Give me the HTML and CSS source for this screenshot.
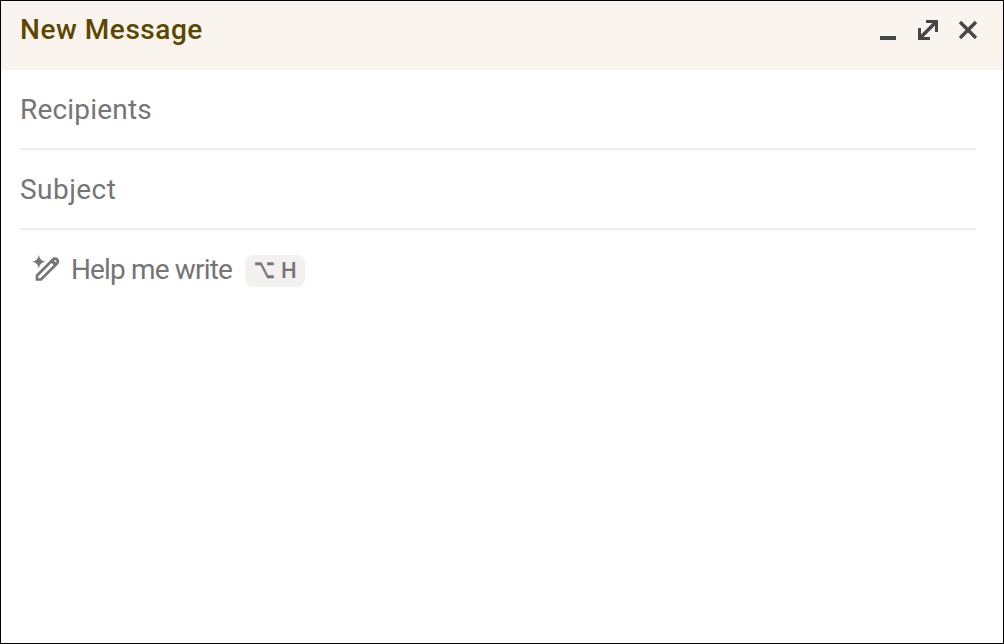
FILE: index.html
```html
<!DOCTYPE html>
<html lang="en">

<head>
    <meta charset="utf-8">
    <title>New Message</title>
    <link rel="stylesheet" href="styles.css">
</head>

<body>
    <div class="compose">
        <div class="header">
            <div class="title">New Message</div>
            <div class="actions">
                <svg class="icon" width="24" height="24" viewBox="0 0 24 24">
                    <path d="M4 18h16v4H4z" />
                </svg>
                <svg class="icon" width="24" height="24" viewBox="0 0 24 24">
                    <path d="M10 2h12v12h-3V7.500L7.500 19H14v3H2V10h3v6.500L16.500 5H10z" />
                </svg>
                <svg class="icon close" width="24" height="24" viewBox="0 0 24 24">
                    <path d="M4 4l16 16M20 4L4 20" />
                </svg>
            </div>
        </div>

        <div class="fields">
            <div class="field"><span class="recipients">Recipients</span></div>
            <div class="field"><span class="subject">Subject</span></div>
        </div>

        <div class="help">
            <svg class="pencil" width="28" height="28" viewBox="0 0 28 28">
                <path class="star" d="M6.800 0Q7.800 5.800 13.300 6.700Q7.800 7.600 6.800 13.400Q5.800 7.600 0.300 6.700Q5.800 5.800 6.800 0z" />
                <path class="outline" d="M5 24.500v-4L21 4.500a2.600 2.600 0 0 1 4 4L9 24.500z" />
                <path class="star" d="M18.500 7L21 4.500l4 4-2.500 2.500z" />
            </svg>
            <span class="help-text">Help me write</span>
            <span class="shortcut"><span class="option">⌥</span><span class="key">H</span></span>
        </div>
    </div>
</body>

</html>
```
FILE: styles.css
```css
* {
    box-sizing: border-box;
}

body {
    margin: 0;
    font-family: Roboto, "Liberation Sans", sans-serif;
    font-size: 28px;
    color: #757575;
}

.compose {
    height: 644px;
    border: 1px solid #000;
    background-color: #fff;
}

.header {
    display: flex;
    justify-content: space-between;
    height: 69px;
    padding: 9px 23px 0 19px;
    background-color: #f9f5ee;
}

.title {
    line-height: 40px;
    font-weight: 500;
    letter-spacing: 0.55px;
    color: #5c4700;
}

.actions {
    display: flex;
    gap: 16px;
    padding-top: 8px;
}

.icon {
    fill: #444746;
}

.close {
    fill: none;
    stroke: #444746;
    stroke-width: 3.3;
}

.fields {
    margin: 0 27px 0 19px;
}

.field {
    height: 80px;
    line-height: 79px;
    border-bottom: 2px solid #eee;
}

.recipients {
    letter-spacing: 0.2px;
}

.subject {
    letter-spacing: 0.45px;
}

.help {
    display: flex;
    align-items: center;
    height: 80px;
    padding-left: 31px;
}

.pencil {
    margin: 0 11px 3px 0;
}

.star {
    fill: #757575;
}

.outline {
    fill: none;
    stroke: #757575;
    stroke-width: 2.7;
}

.help-text {
    margin-bottom: 2px;
    letter-spacing: -0.85px;
}

.shortcut {
    display: flex;
    align-items: center;
    width: 60px;
    height: 32px;
    margin: 2px 0 0 13px;
    padding-left: 9px;
    border-radius: 8px;
    background-color: #f2f1f0;
    font-size: 22px;
    font-weight: 500;
}

.option {
    width: 27px;
    margin-bottom: 6px;
    font-family: "DejaVu Sans", sans-serif;
    -webkit-text-stroke: 0.4px #757575;
    transform: scale(0.83, 1.2);
    transform-origin: left center;
}

.key {
    margin-bottom: 2px;
}
```
